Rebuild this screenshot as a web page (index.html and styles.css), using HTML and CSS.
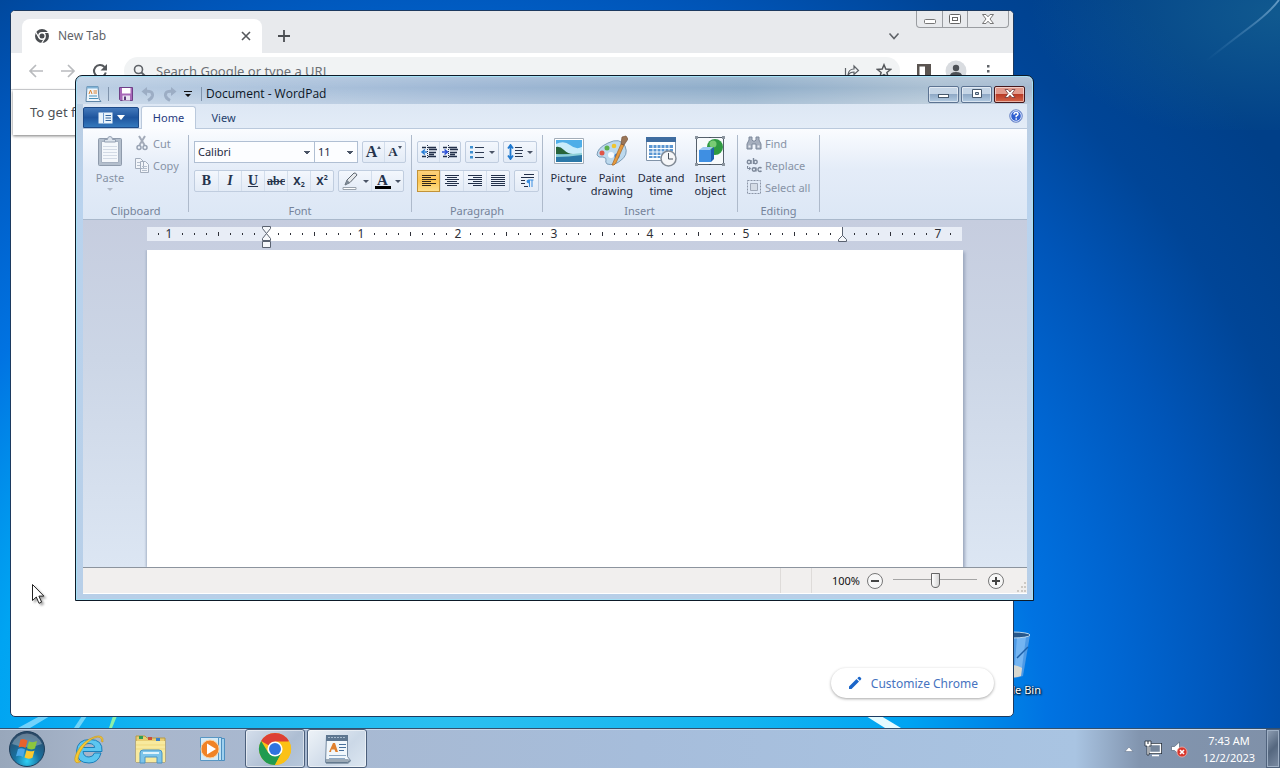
FILE: index.html
```
<!DOCTYPE html>
<html lang="en">
<head>
    <meta charset="UTF-8">
    <meta name="viewport" content="width=device-width, initial-scale=1.0">
    <title>Desktop</title>
    <link rel="stylesheet" href="styles.css">
</head>
<body>

  <main class="desktop">
    <!-- Wallpaper light rays -->
    <svg class="wallpaper" viewBox="0 0 1280 728" preserveAspectRatio="none">
      <defs>
        <radialGradient id="teal" cx="1" cy=".1" r="1"><stop offset="0" stop-color="#2f8a9c" stop-opacity=".35"/><stop offset="1" stop-color="#2f8a9c" stop-opacity="0"/></radialGradient>
        <linearGradient id="ray" x1="0" y1="1" x2="1" y2="0"><stop offset="0" stop-color="#5b93c4" stop-opacity="0"/><stop offset="1" stop-color="#8ab8dc"/></linearGradient>
      </defs>
      <path d="M18 728 40 716h10L30 728z" fill="#9fe4ff" opacity=".7"/>
      <path d="M74 728 82 716h5L79 728z" fill="#6fd4f8"/>
      <path d="M109 728 113 716h4L112 728z" fill="#8af0a8"/>
      <path d="M866 716h15l20 12h-16z" fill="#e4fbff"/>
      <path d="M1030 0H1280V130H1030z" fill="url(#teal)"/>
      <path d="M1206 61Q1230 42 1250 27T1279 0" stroke="url(#ray)" stroke-width="2" fill="none" opacity=".7"/>
    </svg>

    <div class="desktop-icon">
      <svg width="40" height="48" viewBox="0 0 40 48">
        <path d="M3 4 9 45q11 4 22 0L38 4z" fill="#4d9ae6"/>
        <path d="M25 6 34 6 29 44 22 46z" fill="#7ebcf5" opacity=".8"/>
        <path d="M10 37q9-6 20 0l-1 8q-9 3-18 0z" fill="#d9d8cf"/>
        <path d="m25 27 11-11" stroke="#1b5fa8" stroke-width="1.500"/>
        <ellipse cx="20.500" cy="4" rx="17.500" ry="3" fill="#27578a" stroke="#b5d5ee"/>
      </svg>
      <span>Recycle Bin</span>
    </div>

    <!-- Browser window -->
    <section class="window chrome">
      <div class="tab-strip">
        <div class="tab">
          <svg width="16" height="16" viewBox="0 0 16 16">
            <circle cx="8" cy="8" r="7" fill="#4a4d51"/>
            <circle cx="8" cy="8" r="3.200" fill="#4a4d51" stroke="#fff" stroke-width="1.400"/>
            <path d="M8 4.500h7M5 9.700 1.700 4M11 9.700 7.500 15.500" stroke="#fff" stroke-width="1.200"/>
          </svg>
          <span class="tab-title">New Tab</span>
          <button class="plain" aria-label="Close tab"><svg width="16" height="16" viewBox="0 0 16 16"><path d="m4 4 8 8m0-8-8 8" stroke="#55585c" stroke-width="1.600"/></svg></button>
        </div>
        <button class="plain new-tab" aria-label="New tab"><svg width="16" height="16" viewBox="0 0 16 16"><path d="M8 2v12M2 8h12" stroke="#4a4d51" stroke-width="1.800"/></svg></button>
        <button class="plain tab-search" aria-label="Search tabs"><svg width="16" height="16" viewBox="0 0 16 16"><path d="m3.500 5.500 4.500 5 4.500-5" fill="none" stroke="#5f6368" stroke-width="1.600"/></svg></button>
        <div class="chrome-caption">
          <button aria-label="Minimize"><svg width="14" height="12" viewBox="0 0 14 12"><rect x="1.500" y="6.500" width="11" height="4" rx="1" fill="#fff" stroke="#777"/></svg></button>
          <button aria-label="Maximize"><svg width="14" height="12" viewBox="0 0 14 12"><rect x="1.500" y="1.500" width="11" height="9" rx="1" fill="#fff" stroke="#666"/><rect x="4.500" y="4.500" width="5" height="3" fill="#fff" stroke="#666"/></svg></button>
          <button class="wide" aria-label="Close"><svg width="14" height="12" viewBox="0 0 14 12"><path d="M1.500 1.500h3.500L7 3.800 9 1.500h3.500L9 6l3.500 4.500H9L7 8.200 5 10.500H1.500L5 6z" fill="#fff" stroke="#777"/></svg></button>
        </div>
      </div>
      <div class="toolbar">
        <button class="plain" aria-label="Back"><svg width="16" height="16" viewBox="0 0 16 16"><path d="M15 8H2M8 2 2 8l6 6" fill="none" stroke="#b9bbbe" stroke-width="1.700"/></svg></button>
        <button class="plain" aria-label="Forward"><svg width="16" height="16" viewBox="0 0 16 16"><path d="M1 8h13M8 2l6 6-6 6" fill="none" stroke="#b9bbbe" stroke-width="1.700"/></svg></button>
        <button class="plain" aria-label="Reload"><svg width="16" height="16" viewBox="0 0 16 16"><path d="M13.800 9.500A6 6 0 1 1 12.500 4" fill="none" stroke="#55585c" stroke-width="2"/><path d="M15 1v6.500H8.500z" fill="#55585c"/></svg></button>
        <div class="omnibox">
          <svg width="16" height="16" viewBox="0 0 16 16"><circle cx="6.500" cy="6.500" r="4" fill="none" stroke="#5f6368" stroke-width="1.600"/><path d="m9.500 9.500 5 5" stroke="#5f6368" stroke-width="1.800"/></svg>
          <input type="text" placeholder="Search Google or type a URL" aria-label="Address">
          <button class="plain" aria-label="Share"><svg width="16" height="16" viewBox="0 0 16 16"><path d="M1.500 5v9.500h11V12M4 12q.5-6 6-6V3l4.500 4.500L10 11.500V9Q6 9 4 12z" fill="none" stroke="#5f6368" stroke-width="1.200"/></svg></button>
          <button class="plain" aria-label="Bookmark"><svg width="16" height="16" viewBox="0 0 16 16"><path d="m8 1.800 1.800 4.300 4.700.4-3.600 3 1.200 4.700L8 11.700l-4.100 2.500 1.200-4.700-3.600-3 4.700-.4z" fill="none" stroke="#55585c" stroke-width="1.500"/></svg></button>
        </div>
        <div class="toolbar-end">
          <button class="plain" aria-label="Side panel"><svg width="16" height="16" viewBox="0 0 16 16"><path d="M1 1h14v14H1zm2.500 2.500v9H9v-9z" fill="#5a5450" fill-rule="evenodd"/></svg></button>
          <button class="plain avatar" aria-label="Profile"><svg width="22" height="22" viewBox="0 0 22 22"><circle cx="11" cy="11" r="10.500" fill="#d9dce0"/><circle cx="11" cy="8" r="3.200" fill="#4d5156"/><path d="M5 16q0-4 6-4t6 4z" fill="#4d5156"/></svg></button>
          <button class="plain" aria-label="Menu"><svg width="16" height="16" viewBox="0 0 16 16"><path d="M7 2h2.500v2.500H7zM7 7h2.500v2.500H7zM7 12h2.500v2.500H7z" fill="#5f6368"/></svg></button>
        </div>
      </div>
      <div class="infobar">To get future Google Chrome updates, you'll need Windows 10 or later.</div>
      <div class="new-tab-page">
        <button class="customize">
          <svg width="14" height="14" viewBox="0 0 14 14"><path d="M1 10.500 8.500 3 11 5.500 3.500 13H1zM9.300 2.200 10.500 1q.8-.7 1.500 0l1 1q.7.800 0 1.500l-1.200 1.200z" fill="#1b66c9"/></svg>
          Customize Chrome
        </button>
      </div>
    </section>

    <!-- WordPad window -->
    <section class="window wordpad">
      <header class="titlebar">
        <svg width="18" height="18" viewBox="0 0 18 18"><path d="M3 1.500h11l1 12.500 2 2.500H2z" fill="#eef6fc" stroke="#5f86a8"/><path d="M3 1.500h11v2H3z" fill="#7fb2d6"/><path d="m5 9 1.500-4L8 9M9.500 6H13M9.500 8H13" stroke="#d98130" fill="none"/><path d="M5 11h8M5 13.500h9" stroke="#4a90b8"/></svg>
        <i class="title-sep"></i>
        <button class="plain" aria-label="Save"><svg width="16" height="16" viewBox="0 0 16 16"><path d="M1.500 1.500h13v13h-12l-1-1z" fill="#a868b8" stroke="#6e3f86"/><path d="M4 2h8.500v5.500H4z" fill="#fff"/><path d="M4.500 9.500h7.500v5H4.500z" fill="#e8e4f2"/><path d="M6 10.500h2V14H6z" fill="#5a3a78"/></svg></button>
        <button class="plain" aria-label="Undo"><svg width="16" height="16" viewBox="0 0 16 16"><path d="M4 5.500q9-1.500 8.500 4-.5 3-4.500 5" fill="none" stroke="#9cadc4" stroke-width="3"/><path d="M7 1v9L1.500 5.500z" fill="#9cadc4"/></svg></button>
        <button class="plain" aria-label="Redo"><svg width="16" height="16" viewBox="0 0 16 16"><path d="M12 5.500q-9-1.500-8.500 4 .5 3 4.500 5" fill="none" stroke="#9cadc4" stroke-width="3"/><path d="M9 1v9l5.500-4.500z" fill="#9cadc4"/></svg></button>
        <button class="plain qat-more" aria-label="Customize Quick Access Toolbar"><svg width="8" height="8" viewBox="0 0 8 8"><path d="M0 1h8v1H0zM1 4h6L4 7z" fill="#111"/></svg></button>
        <i class="title-sep"></i>
        <h1 class="title">Document - WordPad</h1>
        <div class="caption">
          <button aria-label="Minimize"><svg width="14" height="12" viewBox="0 0 14 12"><rect x="1.500" y="6.500" width="10" height="3" fill="#fff" stroke="#46586c"/></svg></button>
          <button aria-label="Maximize"><svg width="14" height="12" viewBox="0 0 14 12"><path d="M2.500 1.500h9v8h-9zM5.500 4.500v2h3v-2z" fill="#fff" fill-rule="evenodd" stroke="#46586c"/></svg></button>
          <button class="close" aria-label="Close"><svg width="14" height="12" viewBox="0 0 14 12"><path d="M2 1.500h3L7 4l2-2.500h3L9 5.500 12 9.500H9L7 7.200 5 9.500H2l3-4z" fill="#fff" stroke="#6d3a3c" stroke-width=".8"/></svg></button>
        </div>
      </header>

      <nav class="ribbon-tabs">
        <button class="app-menu" aria-label="WordPad menu">
          <svg width="15" height="12" viewBox="0 0 15 12"><path d="M.500.500h14v11H.500z" fill="#eaf4fc"/><path d="M5.500 1v10" stroke="#6f9bd0"/><path d="M7.500 3.500H13M7.500 6H13M7.500 8.500H13" stroke="#34649c"/></svg>
          <svg width="8" height="5" viewBox="0 0 8 5"><path d="M0 0h8L4 5z" fill="#fff"/></svg>
        </button>
        <button class="ribbon-tab active">Home</button>
        <button class="ribbon-tab">View</button>
        <button class="plain help" aria-label="Help"><svg width="14" height="14" viewBox="0 0 14 14"><circle cx="7" cy="7" r="6.300" fill="#2f5fd0" stroke="#7f95c8"/><circle cx="7" cy="7" r="5.300" fill="none" stroke="#dfe8fb"/><path d="M5 5.500Q5 3.500 7 3.500t2 1.700Q9 6.200 7.200 7v1.200M7.200 9.300v1.500" fill="none" stroke="#fff" stroke-width="1.500"/></svg></button>
      </nav>

      <div class="ribbon">
        <div class="group clipboard">
          <div class="group-body">
            <button class="big disabled">
              <svg width="28" height="32" viewBox="0 0 28 32"><rect x="2.500" y="3.500" width="23" height="27" rx="1" fill="#b4bfcd" stroke="#8f9bac"/><path d="M5.500 6.500h17v21h-17z" fill="#f4f7fb" stroke="#a5b0c0"/><path d="M7 11.500h14M7 14.500h14M7 17.500h14M7 20.500h14M7 23.500h14" stroke="#d3dae5"/><path d="M8.500 7V4.500h3q0-3 2.500-3t2.500 3h3V7z" fill="#dce3ec" stroke="#94a0b2"/></svg>
              Paste
              <i class="arrow"></i>
            </button>
            <div class="stack">
              <button class="small"><svg width="16" height="16" viewBox="0 0 16 16"><path d="m5 1 5.500 9M11 1 5.500 10" stroke="#a3abb9" stroke-width="2" fill="none"/><circle cx="5" cy="12.500" r="2" fill="none" stroke="#98a3b4" stroke-width="1.500"/><circle cx="11" cy="12.500" r="2" fill="none" stroke="#98a3b4" stroke-width="1.500"/></svg>Cut</button>
              <button class="small"><svg width="16" height="16" viewBox="0 0 16 16"><path d="M1.500 1.500h5l3 3v7h-8zM6.500 4.500h5l3 3v8h-8z" fill="#f2f5fa" stroke="#a3adbc"/><path d="M3 5.500h3M3 8.500h3M8 9.500h5M8 11.500h5M8 13.500h5" stroke="#b5bfcd"/></svg>Copy</button>
            </div>
          </div>
          <div class="group-label">Clipboard</div>
        </div>

        <div class="group font">
          <div class="group-body rows">
            <div class="row combos">
              <select class="combo family" aria-label="Font family"><option>Calibri</option></select>
              <select class="combo size" aria-label="Font size"><option>11</option></select>
              <div class="btns narrow">
                <button class="glyph grow" aria-label="Grow font">A<i class="tip up"></i></button>
                <button class="glyph shrink" aria-label="Shrink font">A<i class="tip"></i></button>
              </div>
            </div>
            <div class="row">
              <div class="btns">
                <button class="glyph"><b>B</b></button>
                <button class="glyph"><b><em>I</em></b></button>
                <button class="glyph"><b><u>U</u></b></button>
                <button class="glyph strike"><s>abc</s></button>
                <button class="glyph script">X<sub>2</sub></button>
                <button class="glyph script">X<sup>2</sup></button>
              </div>
              <div class="btns drop">
                <button aria-label="Text highlight color"><svg width="18" height="18" viewBox="0 0 18 18"><path d="M2 15.500h13v2H2z" fill="#fff" stroke="#9aa3ad"/><path d="m4 13 2-5 7-7q2-.5 3 2L9 10.500z" fill="#e6e9ec" stroke="#5d6670"/><path d="m4 13 5-2.500L6 8z" fill="#7c8894"/></svg><i class="arrow"></i></button>
                <button class="glyph colour" aria-label="Text color"><span>A</span><i class="arrow"></i></button>
              </div>
            </div>
          </div>
          <div class="group-label">Font</div>
        </div>

        <div class="group paragraph">
          <div class="group-body rows">
            <div class="row">
              <div class="btns narrow">
                <button aria-label="Decrease indent"><svg width="18" height="16" viewBox="0 0 18 16"><path d="M2 3.500h4M8 3.500h8M9 5.500h8M9 8.500h7M9 10.500h5M2 12.500h4M8 12.500h8" stroke="#22304a" stroke-width="1.500"/><path d="M7.500 1v14" stroke="#22304a" stroke-dasharray="1 1"/><path d="M7 8H3M5 5.500 2 8l3 2.500" fill="none" stroke="#2b7fd6" stroke-width="1.500"/></svg></button>
                <button aria-label="Increase indent"><svg width="18" height="16" viewBox="0 0 18 16"><path d="M2 3.500h4M8 3.500h8M9 5.500h8M9 8.500h7M9 10.500h5M2 12.500h4M8 12.500h8" stroke="#22304a" stroke-width="1.500"/><path d="M7.500 1v14" stroke="#22304a" stroke-dasharray="1 1"/><path d="M1 8h4.500M3.500 5.500 6.500 8l-3 2.500" fill="none" stroke="#2b4fd6" stroke-width="1.500"/></svg></button>
              </div>
              <div class="btns drop"><button aria-label="Start a list"><svg width="16" height="16" viewBox="0 0 16 16"><path d="M1 2h3v2.500H1zM1 7h3v2.500H1zM1 12h3v2.500H1z" fill="#3d8fd0"/><path d="M6 3.500h9M6 8.500h9M6 13.500h9" stroke="#2c3a52"/></svg><i class="arrow"></i></button></div>
              <div class="btns drop"><button aria-label="Line spacing"><svg width="16" height="16" viewBox="0 0 16 16"><path d="M3.500 2v12M1 4.500 3.500 1 6 4.500M1 11.500 3.500 15 6 11.500" fill="none" stroke="#1f79d0" stroke-width="1.800"/><path d="M8 3.500h7M8 6.500h8M8 9.500h7M8 12.500h8" stroke="#2c3a52"/></svg><i class="arrow"></i></button></div>
            </div>
            <div class="row">
              <div class="btns">
                <button class="selected" aria-label="Align left"><svg width="16" height="14" viewBox="0 0 16 14"><path d="M1 1.500h14M1 3.500h9M1 5.500h14M1 7.500h9M1 9.500h14M1 11.500h9" stroke="#33291a"/></svg></button>
                <button aria-label="Center"><svg width="16" height="14" viewBox="0 0 16 14"><path d="M1 1.500h14M3 3.500h10M1 5.500h14M3 7.500h10M1 9.500h14M3 11.500h10" stroke="#22304a"/></svg></button>
                <button aria-label="Align right"><svg width="16" height="14" viewBox="0 0 16 14"><path d="M1 1.500h14M6 3.500h9M1 5.500h14M6 7.500h9M1 9.500h14M6 11.500h9" stroke="#22304a"/></svg></button>
                <button aria-label="Justify"><svg width="16" height="14" viewBox="0 0 16 14"><path d="M1 1.500h14M1 3.500h14M1 5.500h14M1 7.500h14M1 9.500h14M1 11.500h14" stroke="#22304a"/></svg></button>
              </div>
              <div class="btns"><button aria-label="Paragraph"><svg width="16" height="16" viewBox="0 0 16 16"><path d="M5 1.500h10M2 4.500h13M2 7.500h4M2 10.500h4M5 13.500h4" stroke="#22304a"/><path d="M14.500 6.500h-5q-2 .5-2 2t2.500 2V14h1V7.500h1.500V14h1V7.500h1z" fill="#3a8ee0"/></svg></button></div>
            </div>
          </div>
          <div class="group-label">Paragraph</div>
        </div>

        <div class="group insert">
          <div class="group-body">
            <button class="big">
              <svg width="32" height="32" viewBox="0 0 32 32"><path d="M1.500 3.500h29v25h-29z" fill="#fff" stroke="#a3adb8"/><path d="M3 5h26v22H3z" fill="#4faee8"/><path d="M3 9q8-4 14 1t12 2v7H3z" fill="#c9ecfb"/><path d="M3 12q4-1 8 3t9 4H3z" fill="#27633a"/><path d="M3 19h26v8H3z" fill="#2b78a8"/><path d="M3 19q10 1 26-1v2q-14 2-26 2z" fill="#8fd0d8"/></svg>
              Picture
              <i class="arrow"></i>
            </button>
            <button class="big">
              <svg width="32" height="32" viewBox="0 0 32 32"><path d="M12 8Q24 2 29 11q4 9-5 15-6 5-13 3-2-2-1-4t-3-3q-5 1-6-2Q1 13 12 8z" fill="#bcd9ee" stroke="#7d9db8"/><circle cx="6" cy="18" r="2.500" fill="#e05548"/><circle cx="11" cy="13" r="2.500" fill="#5db04e"/><circle cx="18" cy="11" r="2.300" fill="#f0c52f"/><circle cx="15" cy="20" r="3" fill="#f7fbff"/><circle cx="21" cy="21" r="2.600" fill="#3b82d8"/><path d="m16 30 9-21 3 1-8 18q-2 3-4 2z" fill="#e59a3e" stroke="#a3662a" stroke-width=".7"/><path d="m25 9 1-7 4-1 2 3-4 6z" fill="#9a7658" stroke="#775339" stroke-width=".7"/></svg>
              Paint<br>drawing
            </button>
            <button class="big wide">
              <svg width="32" height="32" viewBox="0 0 32 32"><path d="M1.500 2.500h29v23h-29z" fill="#fff" stroke="#8193a8"/><path d="M1 2h30v5H1z" fill="#3e6ca0"/><path d="M4 10h24v13H4z" fill="#5b96d2"/><path d="M4 13.500h24M4 17h24M4 20.500h24M8 10v13M12 10v13M16 10v13M20 10v13M24 10v13" stroke="#fff"/><circle cx="23.500" cy="23.500" r="7.500" fill="#f5f6f8" stroke="#828b96" stroke-width="1.500"/><path d="M23.500 18v6H28" fill="none" stroke="#49525e"/></svg>
              Date and<br>time
            </button>
            <button class="big">
              <svg width="32" height="32" viewBox="0 0 32 32"><path d="M2.500 2.500h27v27h-27z" fill="#f7fafc" stroke="#55606c"/><circle cx="21" cy="12" r="8" fill="#2f9a42"/><circle cx="19" cy="9" r="3.500" fill="#79cc74"/><path d="m5 15 4-3h10l-3 3z" fill="#9cc8f4"/><path d="M5 15h12v12H5z" fill="#3f8fe2"/><path d="m17 15 3-3v12l-3 3z" fill="#1e5fb4"/><path d="M1 1h3v3H1zM28 1h3v3h-3zM1 28h3v3H1zM28 28h3v3h-3z" fill="#8b949e"/><path d="M15 2h2v1h-2zM15 29h2v1h-2zM2 15h1v2H2zM29 15h1v2h-1z" fill="#44505c"/></svg>
              Insert<br>object
            </button>
          </div>
          <div class="group-label">Insert</div>
        </div>

        <div class="group editing">
          <div class="group-body">
            <div class="stack">
              <button class="small"><svg width="16" height="16" viewBox="0 0 16 16"><path d="M3 2h3v3l1 1h2l1-1V2h3v3l2 4v5h-5V9H6v5H1V9l2-4z" fill="#a6afbe" stroke="#7d889a"/><path d="M2.500 10.500h2v2h-2zM11.500 10.500h2v2h-2z" fill="#e9edf3"/></svg>Find</button>
              <button class="small"><svg width="16" height="16" viewBox="0 0 16 16"><g fill="none" stroke="#7d889a" stroke-width="1.400"><circle cx="3" cy="5" r="1.700"/><path d="M5 3v4M7.500 1v6"/><circle cx="9.500" cy="5" r="1.700"/><circle cx="8" cy="12.500" r="1.700"/><path d="M10 10.500v4M15.500 11.200a2 2 0 1 0 0 2.600"/><path d="M1.500 9v2.500h3M3 9.800l1.700 1.700L3 13.200" stroke-width="1"/></g></svg>Replace</button>
              <button class="small"><svg width="16" height="16" viewBox="0 0 16 16"><path d="M1.500 1.500h13v13h-13z" fill="none" stroke="#8b95a6" stroke-dasharray="2 1"/><path d="M4.500 4.500h7v7h-7z" fill="#d5dce6" stroke="#a0a9b8"/></svg>Select all</button>
            </div>
          </div>
          <div class="group-label">Editing</div>
        </div>
      </div>

      <div class="workspace">
        <div class="ruler">
          <svg width="816" height="22" viewBox="0 0 816 22">
            <defs>
              <pattern id="ticks" x="23" y="0" width="96" height="14" patternUnits="userSpaceOnUse">
                <path d="M12 6h1v2h-1zM24 6h1v2h-1zM36 6h1v2h-1zM48 5h1v4h-1zM60 6h1v2h-1zM72 6h1v2h-1zM84 6h1v2h-1z" fill="#2e3038"/>
              </pattern>
            </defs>
            <path d="M0 0h815v14H0z" fill="#e8edf6"/>
            <path d="M119 0h576v14H119z" fill="#fff"/>
            <path d="M8 0h799v14H8z" fill="url(#ticks)"/>
            <g class="ruler-num">
              <text x="22" y="11">1</text><text x="214" y="11">1</text><text x="311" y="11">2</text><text x="407" y="11">3</text><text x="503" y="11">4</text><text x="599" y="11">5</text><text x="791" y="11">7</text>
            </g>
            <path d="M115.500-.500h8v2l-4 5-4-5zM115.500 13.500v-2l4-5 4 5v2zM115.500 14.500h8v6h-8z" fill="#f6f8fb" stroke="#5a6270"/>
            <path d="M695.500 0v9M691.500 14.500v-2l4-4 4 4v2z" fill="#f6f8fb" stroke="#5a6270"/>
          </svg>
        </div>
        <div class="page"></div>
      </div>

      <footer class="status">
        <span class="status-cell"></span>
        <label class="zoom-value" for="zoom">100%</label>
        <button class="plain" aria-label="Zoom out"><svg width="18" height="18" viewBox="0 0 18 18"><circle cx="9" cy="9" r="7.500" fill="#f7f7f7" stroke="#777"/><path d="M5 9h8" stroke="#444" stroke-width="2"/></svg></button>
        <input type="range" id="zoom" min="0" max="200" value="100">
        <button class="plain" aria-label="Zoom in"><svg width="18" height="18" viewBox="0 0 18 18"><circle cx="9" cy="9" r="7.500" fill="#f7f7f7" stroke="#777"/><path d="M5 9h8M9 5v8" stroke="#444" stroke-width="2"/></svg></button>
        <svg class="grip" width="10" height="10" viewBox="0 0 10 10"><path d="M7 0h2v2H7zM4 4h2v2H4zM7 4h2v2H7zM0 8h2v2H0zM4 8h2v2H4zM7 8h2v2H7z" fill="#cdc9c4"/></svg>
      </footer>
    </section>

    <svg class="pointer" width="14" height="21" viewBox="0 0 14 21"><path d="M.500.500v16l3.800-3.500 2.700 6.300 2.600-1.200-2.700-6h5z" fill="#fff" stroke="#222"/></svg>
  </main>

  <!-- Taskbar -->
  <footer class="taskbar">
    <button class="start" aria-label="Start">
      <svg width="38" height="38" viewBox="0 0 38 38">
        <defs>
          <radialGradient id="orb" cx=".5" cy=".85" r=".8"><stop offset="0" stop-color="#2fd0f5"/><stop offset=".45" stop-color="#18709f"/><stop offset="1" stop-color="#2c4a68"/></radialGradient>
        </defs>
        <circle cx="19" cy="19" r="17.500" fill="url(#orb)" stroke="#1d3d5a"/>
        <path d="M4 14a16 16 0 0 1 30 0Q19 20 4 14z" fill="#fff" opacity=".28"/>
        <path d="M12.500 9.500q3-1.500 7 1l-2 7.500q-3.500-2-7-.5z" fill="#e8622c"/>
        <path d="M21 11.200q4 2 8-.2l-2 7.500q-4 2-8-.2z" fill="#8cc63e"/>
        <path d="M10 19q3.500-1.500 7 .5l-2 7.500q-3.500-2-7-.7z" fill="#4aa7e8"/>
        <path d="M18.500 20.200q4 2 8 .2l-2 7.300q-4 2-8-.2z" fill="#fbc92f"/>
      </svg>
    </button>
    <div class="tasks">
      <button class="task" aria-label="Internet Explorer">
        <svg width="32" height="32" viewBox="0 0 32 32"><path d="M28 20h-6.500q-1.500 4-5.500 4-5.500 0-6-5.500h19Q30 6.500 17 6.500T3.500 18.500Q4 30 16 30q9.500 0 12-10zM10.300 14.500Q11 10.500 16 10.500q5 0 5.700 4z" fill="#5cc6f0" stroke="#1b7fba" fill-rule="evenodd"/><path d="M30 9Q31 1 22 3.500 10 7.500 4 19q-4 8-1 10.500 2 1 5-1-3 .5-3-2Q5 20 13 11 22 2.500 27 4.500q2 1 1.500 4z" fill="#f5c832" stroke="#c99718" stroke-width=".6"/></svg>
      </button>
      <button class="task" aria-label="Windows Explorer">
        <svg width="34" height="32" viewBox="0 0 34 32"><path d="M2 3h9l2 2h18v24H2z" fill="#e9cd72" stroke="#b79a45"/><path d="M5 3h4v3H5z" fill="#2f9e54"/><path d="M14 4h4v3h-4z" fill="#c9503c"/><path d="M22 5h4v3h-4z" fill="#3a80c8"/><path d="M2 8h29v21H2z" fill="#f8ea9e"/><path d="M2 12h29M2 16h29" stroke="#efd97e"/><path d="M6 30V20q0-3 3-3h16q3 0 3 3v10h-5v-6H11v6z" fill="#7cc4ea" stroke="#4a94c4"/><path d="M9 20h16" stroke="#dff3fc" stroke-width="2"/></svg>
      </button>
      <button class="task" aria-label="Windows Media Player">
        <svg width="30" height="28" viewBox="0 0 30 28"><path d="M8.500 3.500h18v22h-18z" fill="#9fd0ee" stroke="#4d8fc0"/><path d="M5.500 2.500h18v23h-18z" fill="#bfe2f5" stroke="#4d8fc0"/><path d="M2.500 2.500h18v23h-18z" fill="#d5ebf7" stroke="#5897c4"/><circle cx="12" cy="14" r="9" fill="#f08326" stroke="#fbd3a4"/><path d="M9 8.500v11l9-5.500z" fill="#fff"/></svg>
      </button>
      <button class="task open" aria-label="Google Chrome">
        <svg width="34" height="34" viewBox="0 0 34 34"><circle cx="17" cy="17" r="16" fill="#fbc116"/><path d="M17 17 3.140 9A16 16 0 0 1 30.860 9L31 9.500H17z" fill="#dd4035"/><path d="M3.140 9A16 16 0 0 0 17 33l6.500-12L17 17l-6.500 4z" fill="#219b50"/><path d="M17 33l6.500-12.200L30.860 9A16 16 0 0 1 17 33z" fill="#fbc116"/><circle cx="17" cy="17" r="7.600" fill="#fff"/><circle cx="17" cy="17" r="6" fill="#2f73e0"/></svg>
      </button>
      <button class="task open active" aria-label="WordPad">
        <svg width="28" height="32" viewBox="0 0 28 32"><path d="M3.500 2.500h21v21l3 4-3 2h-22z" fill="#f1f7fb" stroke="#7489a0"/><path d="M3 2h22v6H3z" fill="#5d7690"/><path d="M5 4.500h18" stroke="#a8bccf" stroke-dasharray="2 1"/><path d="m6 19 4-9h2l3 9h-2.500l-1-2.500H8.500L8 19z" fill="#e0812e"/><path d="M16 11.500h7M16 14.500h7M16 17.500h5" stroke="#47709c"/><path d="M6 22.500h17M6 25.500h16" stroke="#8da9c5"/><path d="M3 26h22l3 2-3 3H3z" fill="#566b80" opacity=".55"/></svg>
      </button>
    </div>
    <div class="tray">
      <button class="plain" aria-label="Show hidden icons"><svg width="10" height="6" viewBox="0 0 10 6"><path d="M1 5.500h8L5 1z" fill="#fff" stroke="#5b6b82" stroke-width=".5"/></svg></button>
      <svg width="18" height="18" viewBox="0 0 18 18"><path d="M5.500 4.500h11v8h-11z" fill="#68798e" stroke="#222c38" stroke-width="3"/><path d="M5.500 4.500h11v8h-11zM8 15.500h7" fill="#75869b" stroke="#fff" stroke-width="1.400"/><path d="M1 1h6v5H5v9H3V6H1z" fill="#fff" stroke="#222c38" stroke-width=".8"/><path d="M4 1v3" stroke="#222c38"/></svg>
      <svg width="18" height="18" viewBox="0 0 18 18"><path d="M1.500 6.500h3l5-4.500v13l-5-4.500h-3z" fill="#fff" stroke="#56657a" stroke-width=".7"/><circle cx="12" cy="12" r="5" fill="#d8362c" stroke="#f0b0a8" stroke-width=".8"/><path d="m10 10 4 4m0-4-4 4" stroke="#fff" stroke-width="1.600"/></svg>
      <time class="clock">7:43 AM<br>12/2/2023</time>
      <button class="show-desktop" aria-label="Show desktop"></button>
    </div>
  </footer>

</body>
</html>
```
FILE: styles.css
```
* {
    box-sizing: border-box;
}
body {
    margin: 0;
    height: 100vh;
    display: flex;
    flex-direction: column;
    overflow: hidden;
    font-family: "Noto Sans", "Open Sans", sans-serif;
    font-size: 11px;
    color: #1e2a3e;
}
button, input, select {
    font: inherit;
    color: inherit;
    margin: 0;
    padding: 0;
    border: none;
    background: none;
}
svg {
    display: block;
    flex: none;
}
.plain {
    display: flex;
    align-items: center;
    justify-content: center;
}
.desktop {
    flex: 1;
    position: relative;
    overflow: hidden;
    background: radial-gradient(circle at 35% 104%, #2cc0f0 0, #12b4f0 300px, #00a4f2 460px, #0073e2 600px, #0066d2 680px, #0055b8 790px, #004597 900px, #003f88 1020px);
}
.wallpaper {
    position: absolute;
    inset: 0;
    width: 100%;
    height: 100%;
}
.desktop-icon {
    position: absolute;
    right: 230px;
    bottom: 29px;
    width: 76px;
    display: flex;
    flex-direction: column;
    align-items: center;
    gap: 2px;
    font-size: 11px;
    line-height: 18px;
    color: #fff;
    white-space: nowrap;
    text-shadow: 1px 1px 2px #000, 0 0 2px #000;
}
.window {
    position: absolute;
    display: flex;
    flex-direction: column;
}

/* Browser */
.chrome {
    inset: 10px 266px 11px 10px;
    border: 1px solid #1c3a60;
    border-radius: 5px;
    background: #fff;
    overflow: hidden;
    font-size: 12px;
    color: #5f6368;
}
.tab-strip {
    display: flex;
    align-items: center;
    height: 42px;
    padding: 8px 4px 0 11px;
    background: #e8eaed;
}
.tab {
    align-self: stretch;
    display: flex;
    align-items: center;
    gap: 8px;
    width: 240px;
    padding: 0 8px 0 12px;
    border-radius: 8px 8px 0 0;
    background: #fff;
}
.tab-title {
    flex: 1;
    padding-bottom: 1px;
}
.new-tab {
    margin-left: 14px;
}
.tab-search {
    margin-left: auto;
    margin-right: 14px;
}
.chrome-caption {
    display: flex;
    align-self: flex-start;
    margin-top: -8px;
    border: 1px solid #9a9da1;
    border-top: none;
    border-radius: 0 0 4px 4px;
}
.chrome-caption button {
    display: flex;
    align-items: center;
    justify-content: center;
    width: 25px;
    height: 16px;
}
.chrome-caption button + button {
    border-left: 1px solid #9a9da1;
}
.chrome-caption .wide {
    width: 41px;
}
.toolbar {
    display: flex;
    align-items: center;
    gap: 16px;
    height: 37px;
    padding: 0 17px 0 17px;
    border-bottom: 1px solid #d5d7da;
}
.omnibox {
    flex: 1;
    display: flex;
    align-items: center;
    gap: 8px;
    height: 28px;
    padding: 0 8px;
    border-radius: 14px;
    background: #f1f3f4;
}
.omnibox input {
    flex: 1;
    min-width: 0;
    outline: none;
    font-size: 13px;
}
.omnibox input::placeholder {
    color: #6c7075;
    opacity: 1;
}
.omnibox button {
    margin-left: 8px;
}
.toolbar-end {
    display: flex;
    align-items: center;
    gap: 13px;
}
.infobar {
    height: 45px;
    margin: 0 2px;
    padding-left: 17px;
    line-height: 45px;
    font-size: 13px;
    color: #4d5156;
    white-space: nowrap;
    box-shadow: 0 1px 3px #777;
}
.new-tab-page {
    flex: 1;
    display: flex;
    align-items: flex-end;
    justify-content: flex-end;
    padding: 18px 19px;
}
.customize {
    display: flex;
    align-items: center;
    gap: 9px;
    height: 30px;
    padding: 0 16px 0 17px;
    border-radius: 15px;
    background: #fff;
    font-size: 12px;
    color: #4673c0;
    box-shadow: 0 1px 3px rgba(0, 0, 0, 0.35);
}

/* WordPad */
.wordpad {
    inset: 75px 246px 127px 75px;
    padding: 1px 6px 6px 7px;
    border: 1px solid #0d1a28;
    border-radius: 7px 7px 0 0;
    background: linear-gradient(#d9e6f2 0, #a9c1dc 4px, #bacde2 28px, #b9d3ee 130px, #b8cfe8);
    box-shadow: inset 0 0 0 1px #a5e0f5;
}
.titlebar {
    display: flex;
    align-items: center;
    height: 27px;
    margin: 0 -5px 0 -6px;
    padding: 7px 6px 0 7px;
    background: linear-gradient(rgba(255, 255, 255, 0.15), transparent 40%, rgba(255, 255, 255, 0.25)), linear-gradient(90deg, #bccfe4, #9fb8d5 40%, #8fadc9 70%, #abc0d3 90%, #a5b9d0);
    border-radius: 6px 6px 0 0;
}
.title-sep {
    width: 1px;
    height: 14px;
    margin: 0 6px;
    background: #7f93ab;
}
.titlebar .plain {
    width: 22px;
}
.titlebar .qat-more {
    width: 14px;
}
.title {
    margin: 0 0 0 -2px;
    font-family: "Open Sans", "Noto Sans", sans-serif;
    font-size: 12px;
    line-height: 18px;
    font-weight: normal;
    color: #0b1524;
}
.caption {
    display: flex;
    gap: 2px;
    margin: 0 1px 0 auto;
}
.caption button {
    display: flex;
    align-items: center;
    justify-content: center;
    width: 31px;
    height: 17px;
    border: 1px solid #5c7392;
    border-radius: 2px;
    background: linear-gradient(#c5d5e6 45%, #8fa9c6 50%, #b3cbe2);
    box-shadow: inset 0 0 0 1px rgba(255, 255, 255, 0.5);
}
.caption .close {
    border-color: #45181d;
    background: linear-gradient(#e29a8d 45%, #b93a26 50%, #d4654a);
}
.ribbon-tabs {
    display: flex;
    align-items: flex-end;
    height: 25px;
    background: linear-gradient(#dde7f4, #e3ecf7);
    border-bottom: 1px solid #bac9dc;
}
.app-menu {
    display: flex;
    align-items: center;
    justify-content: center;
    gap: 4px;
    width: 56px;
    height: 21px;
    margin-right: 2px;
    border: 1px solid #1d4a88;
    border-radius: 2px 2px 0 0;
    background: linear-gradient(#4479bb, #1f559e 50%, #3479bd);
}
.ribbon-tab {
    width: 55px;
    height: 22px;
    border: 1px solid transparent;
    border-bottom: none;
    font-size: 11px;
    line-height: 16px;
    color: #24406c;
}
.ribbon-tab.active {
    height: 23px;
    margin-bottom: -1px;
    border-color: #bac9dc;
    border-radius: 3px 3px 0 0;
    background: #fbfdff;
    color: #1f3a80;
}
.help {
    align-self: center;
    margin: 0 4px 0 auto;
}
.ribbon {
    display: flex;
    height: 91px;
    background: linear-gradient(#fafcff, #e4ecf8 45%, #dce7f5);
    border-bottom: 1px solid #a9b8cb;
}
.group {
    display: flex;
    flex-direction: column;
    padding: 3px 6px 0 5px;
    background: linear-gradient(#aebacb, #aebacb) right 6px / 1px 77px no-repeat;
}
.group-body {
    display: flex;
    height: 71px;
}
.group-label {
    line-height: 16px;
    text-align: center;
    color: #75839a;
}
.clipboard {
    width: 106px;
}
.font {
    width: 223px;
}
.paragraph {
    width: 131px;
}
.insert {
    width: 195px;
    padding-left: 4px;
}
.editing {
    width: 82px;
}
.group-body.rows {
    flex-direction: column;
    gap: 7px;
    padding-top: 9px;
}
.row {
    display: flex;
    gap: 4px;
}
.row.combos {
    gap: 0;
}
.row.combos .btns {
    margin-left: 4px;
}
.big {
    display: flex;
    flex-direction: column;
    align-items: center;
    width: 44px;
    padding-top: 3px;
    line-height: 13px;
}
.big svg {
    height: 32px;
    margin-bottom: 4px;
}
.big.wide {
    width: 56px;
}
.big.disabled {
    color: #8793a6;
}
.arrow {
    flex: none;
    width: 0;
    height: 0;
    border: 3px solid transparent;
    border-top-color: #4a5466;
    border-bottom: none;
}
.big .arrow {
    margin-top: 4px;
}
.disabled .arrow {
    border-top-color: #b0b8c6;
}
.stack {
    display: flex;
    flex-direction: column;
}
.small {
    display: flex;
    align-items: center;
    gap: 3px;
    height: 22px;
    color: #8793a6;
    white-space: nowrap;
}
.clipboard .small {
    padding-left: 2px;
}
.editing .small {
    padding-left: 3px;
}
.combo {
    appearance: none;
    width: 121px;
    height: 22px;
    padding: 0 0 1px 3px;
    border: 1px solid #b0bfd3;
    border-radius: 0;
    background-color: #fcfdff;
    background-image: linear-gradient(to bottom right, #4a5466 50%, transparent 51%), linear-gradient(to bottom left, #4a5466 50%, transparent 51%);
    background-size: 3px 3px;
    background-position: right 4px center, right 7px center;
    background-repeat: no-repeat;
}
.combo.size {
    width: 43px;
    border-left: none;
}
.btns {
    display: flex;
    height: 22px;
    border: 1px solid #c0cddf;
    border-radius: 2px;
    background: linear-gradient(#f3f7fd, #e3ebf6);
}
.btns button {
    display: flex;
    align-items: center;
    justify-content: center;
    gap: 4px;
    width: 23px;
}
.btns button + button {
    border-left: 1px solid #d3deec;
}
.btns.narrow button {
    width: 21px;
}
.btns.drop button {
    width: 32px;
}
.btns .selected {
    margin: -1px 0 -1px -1px;
    border: 1px solid #c29338;
    background: linear-gradient(#fbd17c, #fdc653 50%, #fee08c);
}
.btns .glyph {
    font-family: "Liberation Serif", serif;
    font-size: 14px;
    line-height: 20px;
    font-weight: bold;
    color: #26344c;
}
.btns .strike {
    font-size: 12px;
}
.btns .script {
    font-family: "Noto Sans", sans-serif;
    font-size: 11px;
    gap: 0;
}
.script sub, .script sup {
    font-size: 7px;
    line-height: 7px;
}
.script sub {
    align-self: flex-end;
    padding-bottom: 3px;
}
.script sup {
    align-self: flex-start;
    padding-top: 3px;
}
.btns .grow {
    font-size: 16px;
    gap: 0;
}
.btns .shrink {
    font-size: 13px;
    gap: 0;
}
.tip {
    align-self: flex-start;
    margin-top: 4px;
    border: 2px solid transparent;
    border-top: 3px solid #4a5466;
    border-bottom: none;
}
.tip.up {
    border-top: none;
    border-bottom: 3px solid #4a5466;
}
.colour span {
    width: 16px;
    height: 16px;
    border-bottom: 3px solid #000;
    line-height: 14px;
    text-align: center;
    font-size: 15px;
}
.workspace {
    flex: 1;
    min-height: 0;
    display: flex;
    flex-direction: column;
    align-items: center;
    padding-top: 7px;
    background: linear-gradient(#c6cddf, #ccd6e6 40%, #dce6f3);
}
.ruler {
    height: 23px;
}
.ruler svg {
    overflow: visible;
}
.ruler-num {
    font-size: 12px;
    text-anchor: middle;
    fill: #2e3038;
}
.page {
    flex: 1;
    width: 816px;
    background: #fff;
    box-shadow: 2px 2px 3px #9ba7bd, -1px 0 2px #a9b4c8;
    clip-path: inset(0 -6px 0 -6px);
}
.status {
    display: flex;
    align-items: center;
    justify-content: flex-end;
    height: 27px;
    padding-right: 22px;
    background: #f1efee;
    border-top: 1px solid #8c949e;
    border-bottom: 1px solid #fff;
    position: relative;
}
.status-cell {
    align-self: stretch;
    width: 32px;
    margin-right: 20px;
    border: 1px solid #dedbd9;
    border-width: 0 1px;
}
.zoom-value {
    margin-right: 6px;
    font-size: 11px;
    color: #111;
}
#zoom {
    appearance: none;
    width: 84px;
    height: 18px;
    margin: 0 10px 0 9px;
    background: linear-gradient(#a5a5a5, #a5a5a5) center 7px / 100% 1px no-repeat;
}
#zoom::-webkit-slider-thumb {
    appearance: none;
    width: 9px;
    height: 15px;
    border: 1px solid #666;
    border-radius: 1px 1px 5px 5px;
    background: linear-gradient(90deg, #fff, #d6d6d6);
}
.grip {
    position: absolute;
    right: 0;
    bottom: 1px;
}
.pointer {
    position: absolute;
    left: 32px;
    top: 584px;
    filter: drop-shadow(2px 2px 1px rgba(0, 0, 0, 0.35));
}

/* Taskbar */
.taskbar {
    display: flex;
    height: 40px;
    border-top: 1px solid #33506e;
    background: linear-gradient(90deg, #98a7bb, #a9b6cb 8%, #a6bddb 50%, #a9c4e2 84%, #8295af 89%, #7f90a8);
    box-shadow: inset 0 1px 0 #c9d8ea;
}
.start {
    width: 54px;
    margin-right: 5px;
    display: flex;
    align-items: center;
    justify-content: center;
}
.tasks {
    flex: 1;
    display: flex;
    gap: 2px;
}
.task {
    display: flex;
    align-items: center;
    justify-content: center;
    width: 60px;
}
.task.open {
    border: 1px solid #4b5f7b;
    border-radius: 3px;
    background: linear-gradient(135deg, #d5dfec, #adbdd2 60%, #b7c8dc);
    box-shadow: inset 0 0 0 1px rgba(255, 255, 255, 0.5);
}
.task.open.active {
    background: linear-gradient(135deg, #eef3f8, #cbd8e7 60%, #dde7f1);
}
.tray {
    display: flex;
    align-items: center;
    gap: 8px;
}
.tray .plain {
    margin-right: 2px;
}
.clock {
    width: 60px;
    margin-left: 3px;
    font-size: 11px;
    line-height: 17px;
    text-align: center;
    color: #fff;
}
.show-desktop {
    align-self: stretch;
    width: 14px;
    margin-left: -1px;
    border: 1px solid #4f627c;
    background: linear-gradient(135deg, #8f9fb4, #55677f 50%, #7b8ca3);
    box-shadow: inset 0 0 0 1px #9eafc4;
}
```
